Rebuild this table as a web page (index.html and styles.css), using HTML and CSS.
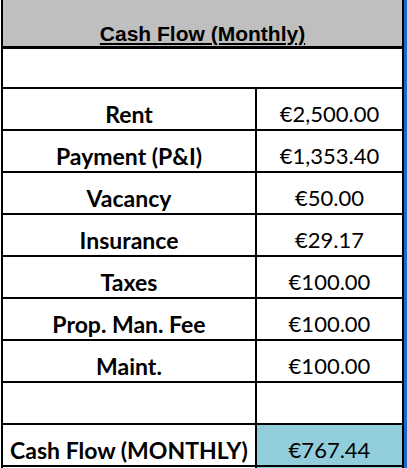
FILE: index.html
```html
<!DOCTYPE html>
<html lang="en">
<head>
<meta charset="utf-8">
<title>Cash Flow (Monthly)</title>
<link rel="stylesheet" href="styles.css">
</head>
<body>
<div class="sheet">
  <div class="grid">
    <div class="cell header"><span class="title">Cash Flow (Monthly)</span></div>
    <div class="cell blank span"></div>

    <div class="cell label">Rent</div>
    <div class="cell value">€2,500.00</div>

    <div class="cell label">Payment (P&amp;I)</div>
    <div class="cell value">€1,353.40</div>

    <div class="cell label">Vacancy</div>
    <div class="cell value">€50.00</div>

    <div class="cell label">Insurance</div>
    <div class="cell value">€29.17</div>

    <div class="cell label">Taxes</div>
    <div class="cell value">€100.00</div>

    <div class="cell label">Prop. Man. Fee</div>
    <div class="cell value">€100.00</div>

    <div class="cell label">Maint.</div>
    <div class="cell value">€100.00</div>

    <div class="cell label"></div>
    <div class="cell value"></div>

    <div class="cell label">Cash Flow (MONTHLY)</div>
    <div class="cell value total">€767.44</div>

    <div class="cell tail"></div>
    <div class="cell tail total"></div>
  </div>
  <div class="edge"></div>
</div>
</body>
</html>
```

FILE: styles.css
```css
html, body {
  margin: 0;
  padding: 0;
  overflow: hidden;
  background: #ffffff;
}

.sheet {
  display: flex;
  width: 407px;
  height: 468px;
  padding-left: 1px;
  box-sizing: border-box;
}

.grid {
  display: grid;
  grid-template-columns: 252px 145px;
  grid-template-rows: 47px 38px repeat(9, 40px) 1px;
  column-gap: 2px;
  row-gap: 2px;
  background: #000000;
  padding: 0 2px;
  align-content: start;
}

.edge {
  width: 3px;
  background: #1b6ac9;
}

.cell {
  background: #ffffff;
  display: flex;
  align-items: flex-end;
  justify-content: center;
  font-family: Lato, "Open Sans", sans-serif;
  font-size: 22px;
  line-height: 26px;
  color: #000000;
  padding-bottom: 2px;
  box-sizing: border-box;
  white-space: nowrap;
}

.header {
  grid-column: 1 / -1;
  background: #bfbfbf;
  border-bottom: 1px solid #000000;
  padding-bottom: 0;
}

.title {
  font-family: "Liberation Sans", Arial, sans-serif;
  font-weight: bold;
  font-size: 21px;
  line-height: 24px;
  text-decoration: underline;
  text-underline-offset: 2px;
  text-decoration-thickness: 1.5px;
}

.span {
  grid-column: 1 / -1;
}

.label {
  font-weight: bold;
  font-size: 23px;
}

.value {
  font-weight: normal;
}

.total {
  background: #92cddc;
}

.tail {
  padding: 0;
}
```
